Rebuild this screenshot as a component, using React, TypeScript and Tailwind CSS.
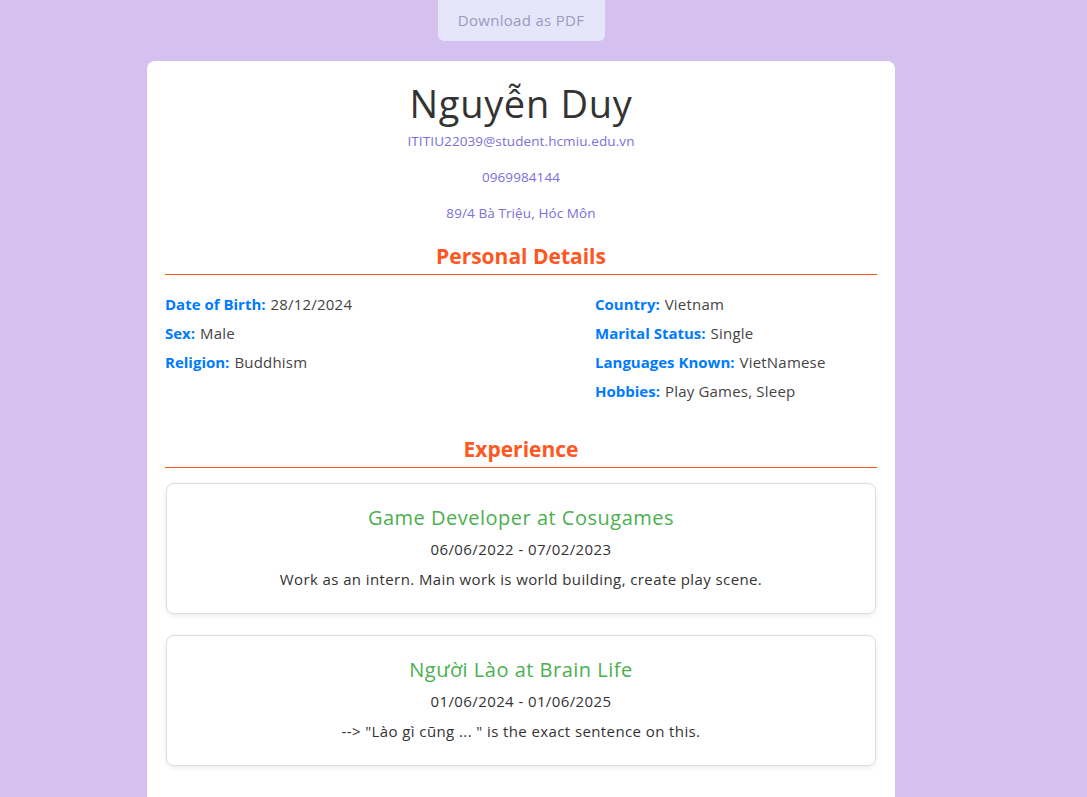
const details = {
  left: [
    ["Date of Birth:", "28/12/2024"],
    ["Sex:", "Male"],
    ["Religion:", "Buddhism"],
  ],
  right: [
    ["Country:", "Vietnam"],
    ["Marital Status:", "Single"],
    ["Languages Known:", "VietNamese"],
    ["Hobbies:", "Play Games, Sleep"],
  ],
};

const experiences = [
  {
    title: "Game Developer at Cosugames",
    date: "06/06/2022 - 07/02/2023",
    desc: "Work as an intern. Main work is world building, create play scene.",
  },
  {
    title: "Người Lào at Brain Life",
    date: "01/06/2024 - 01/06/2025",
    desc: '--> "Lào gì cũng ... " is the exact sentence on this.',
  },
];

const Row = ({ label, value }: { label: string; value: string }) => (
  <div className="h-[29px] flex items-center text-[15px]">
    <span className="font-bold text-[#007bff] mr-[5px]">{label}</span>
    <span className="text-[#444] tracking-[0.2px]">{value}</span>
  </div>
);

const SectionTitle = ({ children }: { children: string }) => (
  <div className="border-b border-[#ff5722] pb-[3px] text-center">
    <h2 className="text-[21px] font-bold text-[#ff5722] leading-[30px]">{children}</h2>
  </div>
);

export default function App() {
  return (
    <div
      className="min-h-[797px] bg-[#d4c1f0] w-full"
      style={{ fontFamily: '"Open Sans", "Noto Sans", sans-serif' }}
    >
      <div className="w-[1042px] flex flex-col items-center">
        <button className="h-[41px] w-[167px] bg-[#e6e6fa] text-[#9a9ac0] text-[15px] tracking-[0.3px] leading-[40px] pb-[2px] rounded-b-[6px] rounded-t-none">
          Download as PDF
        </button>

        <div className="mt-[20px] w-[748px] bg-white rounded-t-[8px] px-[18px] pt-[20px] pb-[40px] min-h-[736px]">
          <h1 className="text-center text-[38px] leading-[44px] text-[#333] tracking-[0.7px]">Nguyễn Duy</h1>
          <div className="text-center text-[13.5px] tracking-[0.1px] text-[#7b6fd8] mt-[4px]">
            <p className="leading-[24px]">ITITIU22039@student.hcmiu.edu.vn</p>
            <p className="leading-[24px] mt-[12px]">0969984144</p>
            <p className="leading-[24px] mt-[12px]">89/4 Bà Triệu, Hóc Môn</p>
          </div>

          <div className="mt-[16px]">
            <SectionTitle>Personal Details</SectionTitle>
          </div>
          <div className="grid grid-cols-[430px_1fr] mt-[15px]">
            <div>
              {details.left.map(([l, v]) => (
                <Row key={l} label={l} value={v} />
              ))}
            </div>
            <div>
              {details.right.map(([l, v]) => (
                <Row key={l} label={l} value={v} />
              ))}
            </div>
          </div>

          <div className="mt-[28px]">
            <SectionTitle>Experience</SectionTitle>
          </div>

          <div className="mt-[15px] flex flex-col gap-[21px]">
            {experiences.map((e) => (
              <div
                key={e.title}
                className="mx-[1px] h-[131px] border border-[#ddd] rounded-[8px] shadow-[0_2px_5px_rgba(0,0,0,0.08)] flex flex-col items-center pt-[22px] text-center"
              >
                <h3 className="text-[20px] leading-[24px] tracking-[0.5px] text-[#4caf50]">{e.title}</h3>
                <p className="text-[15px] leading-[22px] tracking-[0.4px] text-[#333] mt-[8px]">{e.date}</p>
                <p className="text-[15px] leading-[22px] tracking-[0.4px] text-[#333] mt-[8px]">{e.desc}</p>
              </div>
            ))}
          </div>
        </div>
      </div>
    </div>
  );
}
